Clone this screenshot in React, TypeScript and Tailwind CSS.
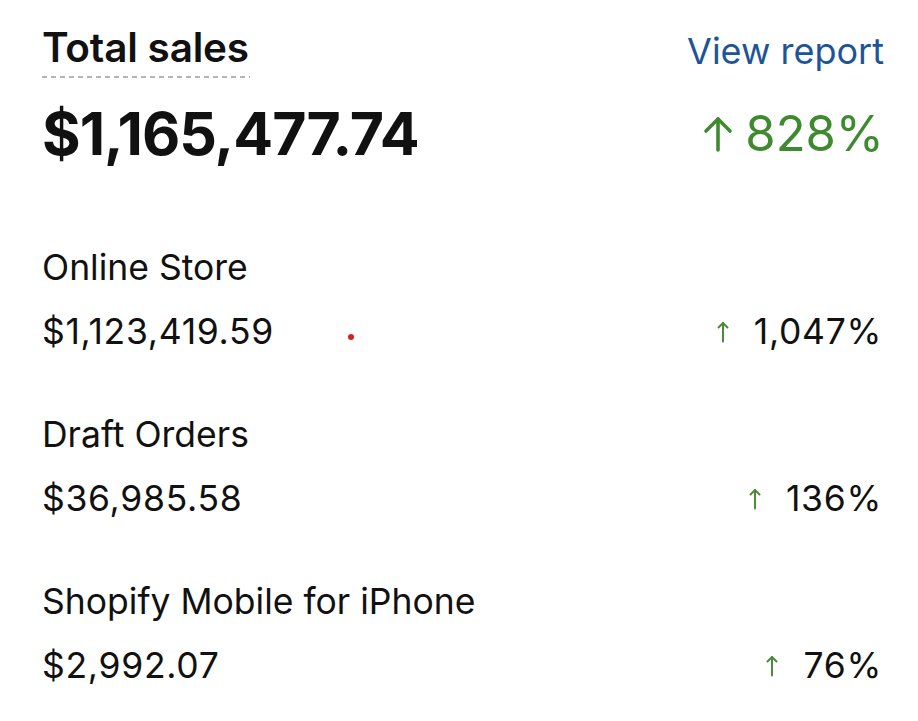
const rows = [
  { name: 'Online Store', amount: '$1,123,419.59', change: '1,047%', dot: true },
  { name: 'Draft Orders', amount: '$36,985.58', change: '136%', dot: false },
  { name: 'Shopify Mobile for iPhone', amount: '$2,992.07', change: '76%', dot: false },
];

function BigArrow() {
  return (
    <svg viewBox="0 0 30 36" className="h-[36px] w-[30px]" fill="none" stroke="currentColor" strokeWidth={3.6} strokeLinecap="round" strokeLinejoin="round">
      <path d="M15 34V3" />
      <path d="M3 15L15 3l12 12" />
    </svg>
  );
}

function SmallArrow() {
  return (
    <svg viewBox="0 0 12 22" className="h-[22px] w-[12px] text-[#4e8a3c]" fill="none" stroke="currentColor" strokeWidth={2} strokeLinecap="round" strokeLinejoin="round">
      <path d="M6 20.5V2" />
      <path d="M1.5 6.5L6 2l4.5 4.5" />
    </svg>
  );
}

export default function App() {
  return (
    <div className="h-[721px] w-[918px] overflow-hidden bg-white pr-[34px] pl-[42px] font-['Inter','Liberation_Sans',sans-serif] text-[#111]">
      <div className="flex items-start justify-between pt-[24px]">
        <div className="inline-block">
          <h2 className="text-[40.5px] leading-[48px] font-semibold tracking-[-0.2px]">Total sales</h2>
          <div className="mt-[4px] h-[2px] w-[208px] bg-[repeating-linear-gradient(to_right,#b5b5b5_0_5px,transparent_5px_9px)]" />
        </div>
        <a className="pt-[6px] text-[36px] leading-[42px] text-[#1c5597]">View report</a>
      </div>

      <div className="mt-[24px] flex items-center justify-between">
        <div className="text-[59px] leading-[64px] font-bold tracking-[-1px]">$1,165,477.74</div>
        <div className="flex items-center gap-[12px] text-[49px] leading-[64px] text-[#3f8a2f]">
          <BigArrow />
          <span>828%</span>
        </div>
      </div>

      <div className="mt-[82px] flex flex-col gap-[63px]">
        {rows.map((row) => (
          <div key={row.name} className="flex flex-col gap-[24px]">
            <div className="text-[35.5px] leading-[40px]">{row.name}</div>
            <div className="flex items-center justify-between text-[35.5px] leading-[40px] tracking-[0.7px]">
              <div className="flex items-center">
                <span>{row.amount}</span>
                {row.dot && <span className="mt-[10px] ml-[74px] h-[6px] w-[6px] rounded-full bg-[#d9211c]" />}
              </div>
              <div className="flex items-center gap-[25px] pr-[2px]">
                <SmallArrow />
                <span>{row.change}</span>
              </div>
            </div>
          </div>
        ))}
      </div>
    </div>
  );
}
